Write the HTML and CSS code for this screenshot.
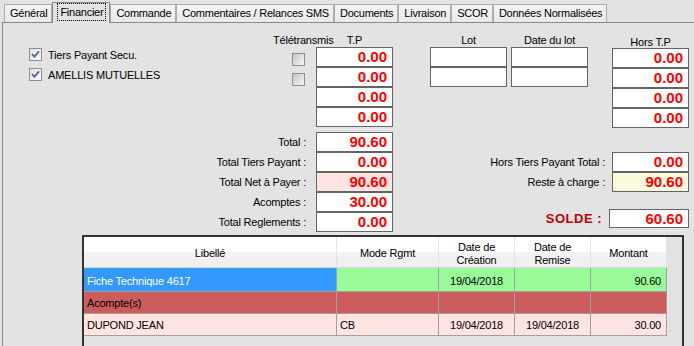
FILE: index.html
```html
<!DOCTYPE html>
<html lang="fr">
<head>
    <meta charset="UTF-8">
    <title>Financier</title>
    <link rel="stylesheet" href="styles.css">
</head>
<body>
    <div class="tabs">
        <div class="tab">Général</div>
        <div class="tab active"><span class="focus">Financier</span></div>
        <div class="tab">Commande</div>
        <div class="tab">Commentaires / Relances SMS</div>
        <div class="tab">Documents</div>
        <div class="tab">Livraison</div>
        <div class="tab">SCOR</div>
        <div class="tab">Données Normalisées</div>
    </div>

    <div class="panel">
        <div class="top">
            <div class="checks">
                <div class="check">
                    <span class="cb checked"><svg width="11" height="11" viewBox="0 0 11 11"><path d="M2 5.2 L4.4 7.8 L9 2.4" fill="none" stroke="#4b5f92" stroke-width="1.7"/></svg></span>
                    Tiers Payant Secu.
                </div>
                <div class="check">
                    <span class="cb checked"><svg width="11" height="11" viewBox="0 0 11 11"><path d="M2 5.2 L4.4 7.8 L9 2.4" fill="none" stroke="#4b5f92" stroke-width="1.7"/></svg></span>
                    AMELLIS MUTUELLES
                </div>
            </div>

            <div class="tele">
                <div class="head">Télétransmis</div>
                <span class="cb"></span>
                <span class="cb"></span>
            </div>

            <div class="col">
                <div class="head">T.P</div>
                <div class="field">0.00</div>
                <div class="field">0.00</div>
                <div class="field">0.00</div>
                <div class="field">0.00</div>
            </div>

            <div class="col lot">
                <div class="head">Lot</div>
                <div class="field"></div>
                <div class="field"></div>
            </div>

            <div class="col date">
                <div class="head">Date du lot</div>
                <div class="field"></div>
                <div class="field"></div>
            </div>

            <div class="col hors">
                <div class="head">Hors T.P</div>
                <div class="field">0.00</div>
                <div class="field">0.00</div>
                <div class="field">0.00</div>
                <div class="field">0.00</div>
            </div>
        </div>

        <div class="totals">
            <div class="tot-left">
                <div class="row"><div class="lbl">Total :</div><div class="field">90.60</div></div>
                <div class="row"><div class="lbl">Total Tiers Payant :</div><div class="field">0.00</div></div>
                <div class="row"><div class="lbl">Total Net à Payer :</div><div class="field pink">90.60</div></div>
                <div class="row"><div class="lbl">Acomptes :</div><div class="field">30.00</div></div>
                <div class="row"><div class="lbl">Total Reglements :</div><div class="field">0.00</div></div>
            </div>
            <div class="tot-right">
                <div class="row"><div class="lbl">Hors Tiers Payant Total :</div><div class="field">0.00</div></div>
                <div class="row"><div class="lbl">Reste à charge :</div><div class="field yellow">90.60</div></div>
                <div class="row solde"><div class="lbl">SOLDE :</div><div class="field">60.60</div></div>
            </div>
        </div>

        <div class="grid">
            <div class="table">
                <div class="th">Libellé</div>
                <div class="th">Mode Rgmt</div>
                <div class="th">Date de<br>Création</div>
                <div class="th">Date de<br>Remise</div>
                <div class="th">Montant</div>

                <div class="td first blue">Fiche Technique 4617</div>
                <div class="td first green"></div>
                <div class="td first green center">19/04/2018</div>
                <div class="td first green"></div>
                <div class="td first green right">90.60</div>

                <div class="td red">Acompte(s)</div>
                <div class="td red"></div>
                <div class="td red"></div>
                <div class="td red"></div>
                <div class="td red"></div>

                <div class="td rose">DUPOND JEAN</div>
                <div class="td rose">CB</div>
                <div class="td rose center">19/04/2018</div>
                <div class="td rose center">19/04/2018</div>
                <div class="td rose right">30.00</div>
            </div>
        </div>
    </div>
</body>
</html>
```

FILE: styles.css
```css
* {
    box-sizing: border-box;
}
html, body {
    height: 100%;
    margin: 0;
    padding: 0;
    overflow: hidden;
}
body {
    background: #e3e3e3;
    font-family: "Liberation Sans", Arial, sans-serif;
    font-size: 11px;
    letter-spacing: -0.2px;
    color: #000;
}

/* onglets */
.tabs {
    display: flex;
    align-items: flex-end;
    height: 22px;
    padding-left: 4px;
}
.tab {
    height: 18px;
    padding: 0 4px 0 5px;
    border: 1px solid #acacac;
    border-bottom: none;
    background: linear-gradient(#f4f4f4, #e9e9e9);
    line-height: 16px;
    letter-spacing: -0.25px;
    white-space: nowrap;
}
.tab.active {
    position: relative;
    z-index: 1;
    height: 21px;
    margin-bottom: -1px;
    padding: 1px 4px 0 5px;
    border-color: #898989;
    background: #e3e3e3;
}
.focus {
    display: inline-block;
    line-height: 16px;
    padding: 0 2px;
    outline: 1px dotted #000;
}

.panel {
    margin-left: 2px;
    height: 400px;
    padding-top: 12px;
    border-top: 1px solid #898989;
    border-left: 1px solid #898989;
}

/* cases a cocher */
.cb {
    display: flex;
    width: 13px;
    height: 13px;
    border: 1px solid #8f8f8f;
    background: linear-gradient(135deg, #c4c4c4, #f7f7f7);
}
.cb.checked {
    background: linear-gradient(135deg, #dedede, #fcfcfc);
}

.top {
    display: flex;
    height: 93px;
}
.checks {
    width: 267px;
    padding: 13px 0 0 26px;
}
.check {
    display: flex;
    align-items: center;
    height: 13px;
    margin-bottom: 7px;
    white-space: nowrap;
}
.check .cb {
    margin-right: 6px;
}
.head {
    height: 11px;
    line-height: 11px;
    white-space: nowrap;
}
.tele {
    width: 46px;
}
.tele .head {
    padding-left: 3px;
}
.tele .cb {
    margin: 7px 0 0 22px;
}
.col {
    width: 77px;
}
.col .head {
    text-align: center;
    margin-bottom: 1px;
}
.lot {
    margin-left: 37px;
}
.date {
    margin-left: 4px;
}
.hors {
    margin-left: 24px;
    padding-top: 2px;
}
.hors .head {
    margin-bottom: 0;
}

/* champs */
.field {
    width: 77px;
    height: 20px;
    padding-right: 5px;
    border: 1px solid #646464;
    background: #fff;
    color: #ff0000;
    font-size: 15px;
    font-weight: bold;
    line-height: 18px;
    letter-spacing: 0;
    text-align: right;
}
.field.pink {
    background: #ffe4e1;
}
.field.yellow {
    background: #fafadc;
}

.totals {
    display: flex;
    margin-top: 4px;
}
.tot-left {
    margin-left: 177px;
}
.row {
    display: flex;
    height: 20px;
}
.lbl {
    width: 126px;
    margin-right: 10px;
    line-height: 20px;
    text-align: right;
    white-space: nowrap;
}
.tot-right {
    display: flex;
    flex-direction: column;
    align-items: flex-end;
    width: 296px;
    margin-top: 20px;
}
.tot-right .lbl {
    width: auto;
    margin-right: 7px;
}
.solde {
    height: 19px;
    margin-top: 17px;
}
.solde .lbl {
    line-height: 19px;
    font-size: 13px;
    font-weight: bold;
    letter-spacing: 0.5px;
    color: #c00000;
}
.solde .field {
    width: 80px;
    height: 19px;
    line-height: 17px;
}

/* grille */
.grid {
    width: 602px;
    height: 140px;
    margin: 3px 0 0 79px;
    border: 2px solid #333;
    background: #e3e3e3;
}
.table {
    display: grid;
    grid-template-columns: 253px 102px 76px 76px 76px;
    grid-template-rows: 31px 24px 22px 22px;
    width: 583px;
}
.th {
    display: flex;
    flex-direction: column;
    justify-content: center;
    padding-top: 3px;
    border-right: 1px solid #e3e3e3;
    border-bottom: 1px solid #d5d5d5;
    background: linear-gradient(#fff 0%, #fff 50%, #f3f3f4 52%, #efeff1 100%);
    line-height: 13px;
    text-align: center;
}
.td {
    display: flex;
    align-items: center;
    padding: 0 3px;
    border-right: 1px solid #a0a0a0;
    border-bottom: 1px solid #a0a0a0;
    white-space: nowrap;
}
.td.first {
    padding-top: 3px;
}
.td.center {
    justify-content: center;
}
.td.right {
    justify-content: flex-end;
    padding-right: 5px;
}
.blue {
    background: #3399ff;
    color: #fff;
}
.green {
    background: #98fb98;
}
.red {
    background: #cd5c5c;
}
.rose {
    background: #ffe4e1;
}
```
